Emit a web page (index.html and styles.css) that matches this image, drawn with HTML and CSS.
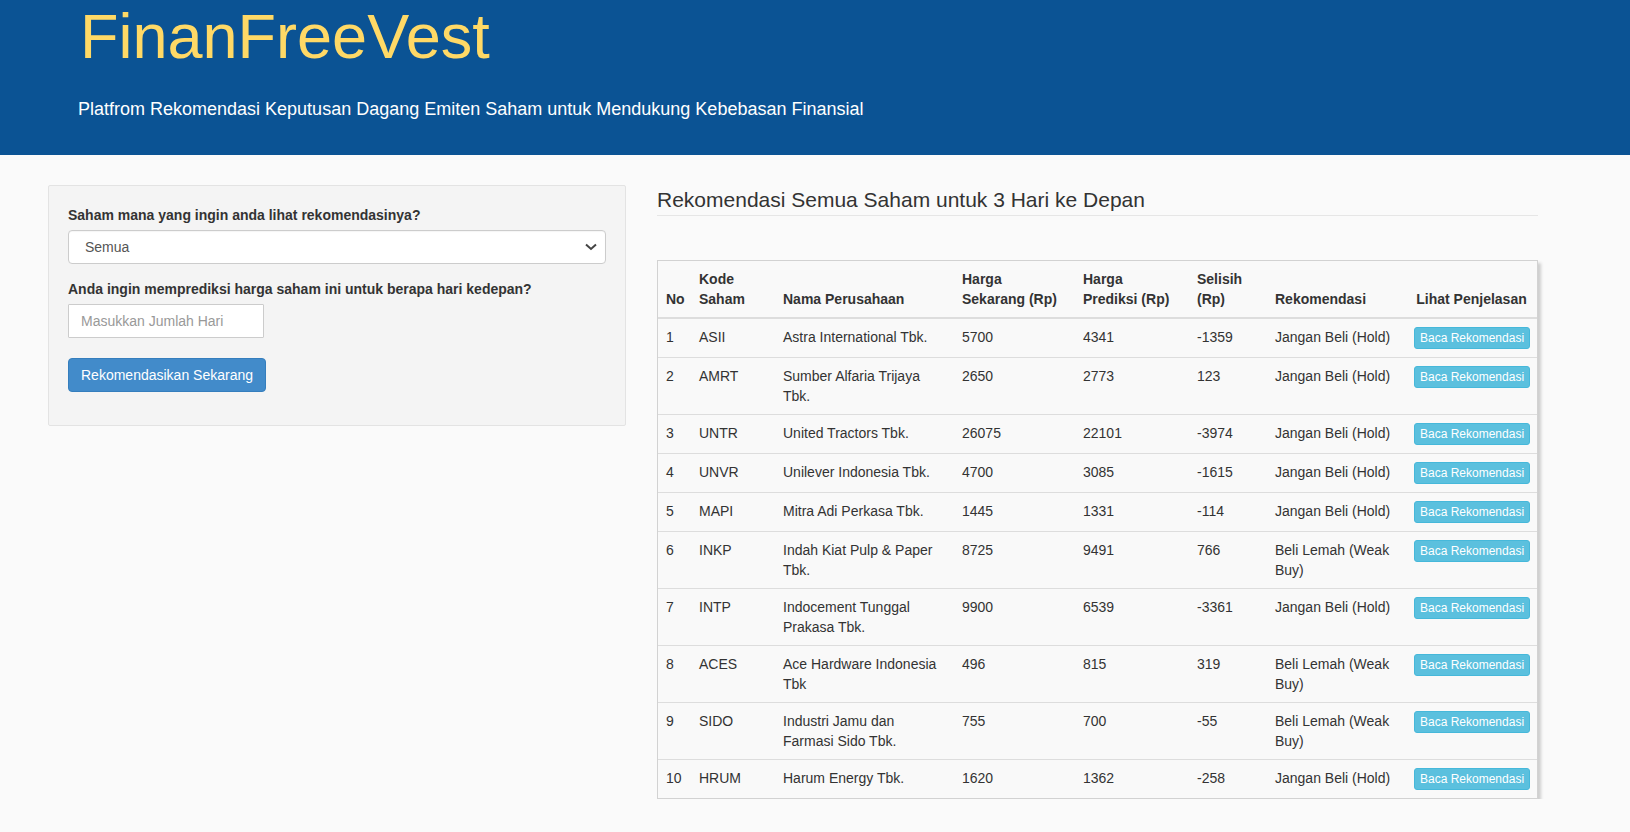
FILE: index.html
```html
<!DOCTYPE html>
<html lang="id">
<head>
<meta charset="utf-8">
<title>FinanFreeVest</title>
<link rel="stylesheet" href="styles.css">
</head>
<body>
<header class="hero">
  <h1 class="hero-title">FinanFreeVest</h1>
  <p class="hero-sub">Platfrom Rekomendasi Keputusan Dagang Emiten Saham untuk Mendukung Kebebasan Finansial</p>
</header>

<main class="main">
  <form class="well">
    <label class="field-label">Saham mana yang ingin anda lihat rekomendasinya?</label>
    <div class="select-wrap">
      <select class="form-select">
        <option>Semua</option>
      </select>
      <svg class="chev" width="12" height="8" viewBox="0 0 12 8"><polyline points="1,1.5 6,6 11,1.5" fill="none" stroke="#444" stroke-width="2"/></svg>
    </div>
    <label class="field-label second">Anda ingin memprediksi harga saham ini untuk berapa hari kedepan?</label>
    <input class="form-input" type="text" placeholder="Masukkan Jumlah Hari">
    <button type="button" class="btn-primary">Rekomendasikan Sekarang</button>
  </form>

  <section class="results">
    <h3 class="results-title">Rekomendasi Semua Saham untuk 3 Hari ke Depan</h3>
    <table class="table">
      <colgroup>
        <col class="c-no"><col class="c-kode"><col class="c-nama"><col class="c-hs"><col class="c-hp"><col class="c-sel"><col class="c-rek"><col class="c-lihat">
      </colgroup>
      <thead>
        <tr>
          <th>No</th><th>Kode Saham</th><th>Nama Perusahaan</th><th>Harga Sekarang (Rp)</th><th>Harga Prediksi (Rp)</th><th>Selisih (Rp)</th><th>Rekomendasi</th><th class="center">Lihat Penjelasan</th>
        </tr>
      </thead>
      <tbody>
        <tr><td>1</td><td>ASII</td><td>Astra International Tbk.</td><td>5700</td><td>4341</td><td>-1359</td><td>Jangan Beli (Hold)</td><td><button type="button" class="btn-info">Baca Rekomendasi</button></td></tr>
        <tr><td>2</td><td>AMRT</td><td>Sumber Alfaria Trijaya Tbk.</td><td>2650</td><td>2773</td><td>123</td><td>Jangan Beli (Hold)</td><td><button type="button" class="btn-info">Baca Rekomendasi</button></td></tr>
        <tr><td>3</td><td>UNTR</td><td>United Tractors Tbk.</td><td>26075</td><td>22101</td><td>-3974</td><td>Jangan Beli (Hold)</td><td><button type="button" class="btn-info">Baca Rekomendasi</button></td></tr>
        <tr><td>4</td><td>UNVR</td><td>Unilever Indonesia Tbk.</td><td>4700</td><td>3085</td><td>-1615</td><td>Jangan Beli (Hold)</td><td><button type="button" class="btn-info">Baca Rekomendasi</button></td></tr>
        <tr><td>5</td><td>MAPI</td><td>Mitra Adi Perkasa Tbk.</td><td>1445</td><td>1331</td><td>-114</td><td>Jangan Beli (Hold)</td><td><button type="button" class="btn-info">Baca Rekomendasi</button></td></tr>
        <tr><td>6</td><td>INKP</td><td>Indah Kiat Pulp &amp; Paper Tbk.</td><td>8725</td><td>9491</td><td>766</td><td>Beli Lemah (Weak Buy)</td><td><button type="button" class="btn-info">Baca Rekomendasi</button></td></tr>
        <tr><td>7</td><td>INTP</td><td>Indocement Tunggal Prakasa Tbk.</td><td>9900</td><td>6539</td><td>-3361</td><td>Jangan Beli (Hold)</td><td><button type="button" class="btn-info">Baca Rekomendasi</button></td></tr>
        <tr><td>8</td><td>ACES</td><td>Ace Hardware Indonesia Tbk</td><td>496</td><td>815</td><td>319</td><td>Beli Lemah (Weak Buy)</td><td><button type="button" class="btn-info">Baca Rekomendasi</button></td></tr>
        <tr><td>9</td><td>SIDO</td><td>Industri Jamu dan Farmasi Sido Tbk.</td><td>755</td><td>700</td><td>-55</td><td>Beli Lemah (Weak Buy)</td><td><button type="button" class="btn-info">Baca Rekomendasi</button></td></tr>
        <tr><td>10</td><td>HRUM</td><td>Harum Energy Tbk.</td><td>1620</td><td>1362</td><td>-258</td><td>Jangan Beli (Hold)</td><td><button type="button" class="btn-info">Baca Rekomendasi</button></td></tr>
      </tbody>
    </table>
  </section>
</main>
</body>
</html>
```

FILE: styles.css
```css
* { box-sizing: border-box; }

html, body {
  margin: 0;
  padding: 0;
}

body {
  font-family: "Liberation Sans", Arial, Helvetica, sans-serif;
  font-size: 14px;
  line-height: 20px;
  color: #333;
  background: #fafafa;
}

/* Header */
.hero {
  background: #0b5394;
  height: 155px;
  padding: 1px 0 0 78px;
}

.hero-title {
  margin: 0 0 0 2px;
  font-size: 63px;
  line-height: 70px;
  font-weight: normal;
  color: #ffd966;
}

.hero-sub {
  margin: 23px 0 0 0;
  font-size: 18px;
  line-height: 30px;
  font-weight: 200;
  color: #fff;
}

/* Main layout */
.main {
  display: flex;
  align-items: flex-start;
  gap: 31px;
  padding: 30px 0 0 48px;
}

/* Left panel */
.well {
  width: 578px;
  flex: none;
  background: #f4f4f4;
  border: 1px solid #e3e3e3;
  border-radius: 2px;
  padding: 19px 19px 33px 19px;
  display: flex;
  flex-direction: column;
  align-items: flex-start;
}

.field-label {
  display: block;
  font-weight: bold;
  font-size: 14px;
  line-height: 20px;
  margin-bottom: 5px;
}

.field-label.second {
  margin-top: 15px;
}

.select-wrap {
  position: relative;
  width: 100%;
}

.form-select {
  display: block;
  width: 100%;
  height: 34px;
  padding: 0 30px 0 16px;
  font-family: inherit;
  font-size: 14px;
  color: #555;
  background: #fff;
  border: 1px solid #ccc;
  border-radius: 4px;
  appearance: none;
  -webkit-appearance: none;
  box-shadow: inset 0 1px 1px rgba(0,0,0,.04);
}

.chev {
  position: absolute;
  right: 9px;
  top: 13px;
  pointer-events: none;
}

.form-input {
  display: block;
  width: 196px;
  height: 34px;
  padding: 6px 12px;
  font-family: inherit;
  font-size: 14px;
  color: #555;
  background: #fff;
  border: 1px solid #ccc;
  border-radius: 1px;
}

.form-input::placeholder {
  color: #999;
}

.btn-primary {
  margin-top: 20px;
  height: 34px;
  padding: 6px 12px;
  font-family: inherit;
  font-size: 14px;
  line-height: 20px;
  color: #fff;
  background: #428bca;
  border: 1px solid #357ebd;
  border-radius: 4px;
}

/* Results */
.results {
  width: 881px;
  flex: none;
}

.results-title {
  margin: 4px 0 0 0;
  padding-bottom: 4px;
  font-size: 21px;
  line-height: 22px;
  font-weight: normal;
  color: #333;
  border-bottom: 1px solid #e6e6e6;
}

.table {
  margin-top: 44px;
  width: 881px;
  table-layout: fixed;
  border-collapse: separate;
  border-spacing: 0;
  border: 1px solid #d2d2d2;
  background: #f9f9f9;
  box-shadow: 3px 3px 3px rgba(0,0,0,.18);
}

.c-no { width: 33px; }
.c-kode { width: 84px; }
.c-nama { width: 179px; }
.c-hs { width: 121px; }
.c-hp { width: 114px; }
.c-sel { width: 78px; }
.c-rek { width: 139px; }
.c-lihat { width: 131px; }

.table th {
  text-align: left;
  vertical-align: bottom;
  font-weight: bold;
  padding: 8px;
  line-height: 20px;
  border-bottom: 2px solid #ddd;
}

.table th.center {
  text-align: center;
}

.table td {
  vertical-align: top;
  padding: 8px;
  line-height: 20px;
  border-top: 1px solid #ddd;
}

.table tbody tr:first-child td {
  border-top: 0;
}

.table td:last-child {
  padding-right: 0;
}

.btn-info {
  display: inline-block;
  white-space: nowrap;
  padding: 1px 5px;
  font-family: inherit;
  font-size: 12px;
  line-height: 18px;
  color: #fff;
  background: #5bc0de;
  border: 1px solid #46b8da;
  border-radius: 3px;
}
```
